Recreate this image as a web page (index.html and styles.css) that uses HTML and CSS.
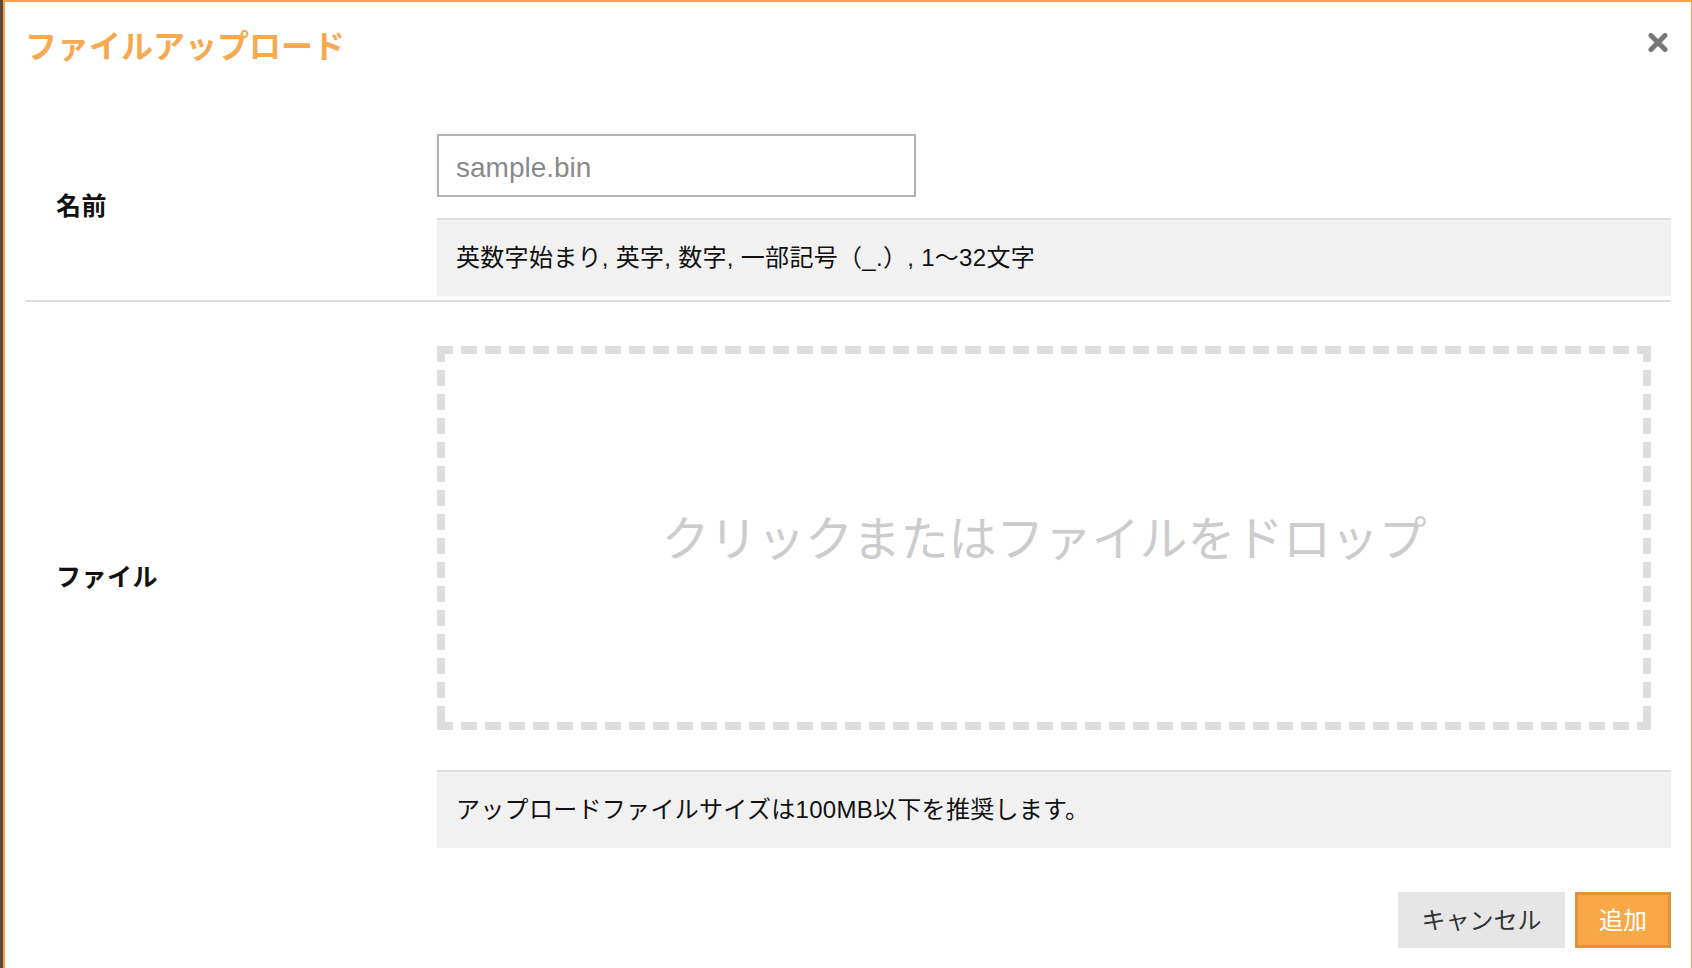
FILE: index.html
```html
<!DOCTYPE html>
<html lang="ja">
<head>
  <meta charset="UTF-8">
  <meta name="viewport" content="width=device-width, initial-scale=1.0">
  <title>ファイルアップロード</title>
  <link rel="stylesheet" href="styles.css">
</head>
<body>
  <div class="dialog">
    <header class="dialog-header">
      <h1 class="dialog-title">ファイルアップロード</h1>
      <button class="close-btn" aria-label="閉じる">
        <svg width="20" height="19" viewBox="0 0 20 19">
          <path d="M3 2.5 L17 16.5 M17 2.5 L3 16.5" stroke="#777" stroke-width="5" stroke-linecap="round"/>
        </svg>
      </button>
    </header>

    <div class="form-row name-row">
      <label class="row-label" for="name">名前</label>
      <div class="row-body">
        <input class="text-input" type="text" id="name" placeholder="sample.bin">
        <p class="hint">英数字始まり, 英字, 数字, 一部記号（_.）, 1〜32文字</p>
      </div>
    </div>

    <div class="form-row file-row">
      <label class="row-label">ファイル</label>
      <div class="row-body">
        <div class="dropzone">クリックまたはファイルをドロップ</div>
        <p class="hint">アップロードファイルサイズは100MB以下を推奨します。</p>
      </div>
    </div>

    <div class="dialog-footer">
      <button class="btn btn-cancel">キャンセル</button>
      <button class="btn btn-primary">追加</button>
    </div>
  </div>
</body>
</html>
```

FILE: styles.css
```css
html, body {
  margin: 0;
  height: 100%;
}
body {
  background-color: #5c4b30;
  font-family: "Liberation Sans", "Noto Sans CJK JP", sans-serif;
  overflow: hidden;
}
.dialog {
  margin-left: 3px;
  height: 968px;
  box-sizing: border-box;
  background-color: #fff;
  border-top: 2px solid #f5a64c;
  border-left: 2px solid #f5a64c;
  border-right: 1px solid #f5a64c;
  padding: 0 20px;
}
.dialog-header {
  position: relative;
  height: 112px;
}
.dialog-title {
  margin: 0;
  padding-top: 26px;
  font-size: 32px;
  line-height: 38px;
  font-weight: bold;
  color: #f6a94f;
}
.close-btn {
  position: absolute;
  top: 31px;
  right: 3px;
  width: 20px;
  height: 19px;
  padding: 0;
  border: none;
  background: none;
  cursor: pointer;
}
.close-btn svg {
  display: block;
}
.form-row {
  display: grid;
  grid-template-columns: 412px 1fr;
  align-items: center;
}
.row-label {
  padding-left: 31px;
  font-size: 25px;
  font-weight: bold;
  letter-spacing: 0.5px;
  color: #111;
}
.name-row {
  border-bottom: 2px solid #dedede;
}
.name-row .row-label {
  padding-bottom: 6px;
}
.name-row .row-body {
  padding: 20px 0 4px;
}
.text-input {
  display: block;
  width: 479px;
  height: 63px;
  box-sizing: border-box;
  border: 2px solid #b3b3b3;
  border-radius: 0;
  padding: 4px 17px 0;
  font-family: inherit;
  font-size: 28px;
  color: #333;
  outline: none;
}
.text-input::placeholder {
  color: #8a8a8a;
}
.hint {
  display: flex;
  align-items: center;
  height: 78px;
  box-sizing: border-box;
  margin: 21px 0 0;
  padding: 0 19px 5px;
  border-top: 2px solid #e0e0e0;
  background-color: #f1f1f1;
  font-size: 24px;
  letter-spacing: 0.3px;
  color: #111;
}
.file-row .row-body {
  padding-top: 44px;
}
.file-row .hint {
  margin-top: 40px;
}
.dropzone {
  display: flex;
  align-items: center;
  justify-content: center;
  width: 1214px;
  height: 384px;
  box-sizing: border-box;
  padding-bottom: 6px;
  background-image:
    repeating-linear-gradient(90deg, #dddddd 0 16px, transparent 16px 24px),
    repeating-linear-gradient(90deg, #dddddd 0 16px, transparent 16px 24px),
    repeating-linear-gradient(180deg, #dddddd 0 16px, transparent 16px 24px),
    repeating-linear-gradient(180deg, #dddddd 0 16px, transparent 16px 24px);
  background-size: 100% 8px, 100% 8px, 8px 100%, 8px 100%;
  background-position: left top, left bottom, left top, right top;
  background-repeat: no-repeat;
  font-size: 48px;
  letter-spacing: -0.2px;
  color: #cccccc;
  cursor: pointer;
}
.dialog-footer {
  display: flex;
  justify-content: flex-end;
  gap: 10px;
  margin-top: 44px;
}
.btn {
  height: 56px;
  padding: 0 0 3px;
  border: none;
  font-family: inherit;
  font-size: 24px;
  cursor: pointer;
}
.btn-cancel {
  width: 167px;
  background-color: #e6e6e6;
  color: #333;
}
.btn-primary {
  width: 96px;
  background-color: #f8a846;
  border: 3px solid #e2933a;
  color: #fff;
}
```
